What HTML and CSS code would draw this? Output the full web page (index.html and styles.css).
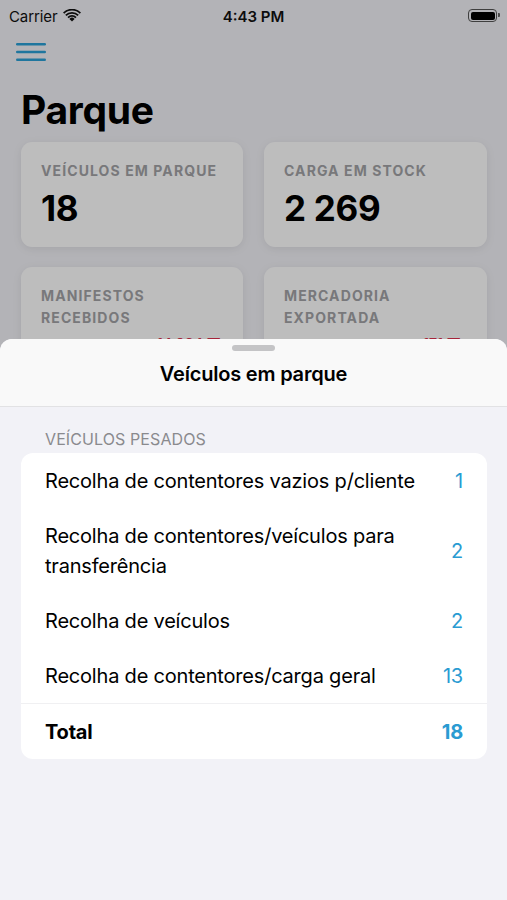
FILE: index.html
```html
<!DOCTYPE html>
<html lang="pt">
<head>
<meta charset="utf-8">
<title>Parque</title>
<link rel="stylesheet" href="styles.css">
</head>
<body>
<div class="screen">
  <div class="statusbar">
    <div class="sb-left">
      <span class="carrier">Carrier</span>
      <svg class="wifi" width="18" height="13" viewBox="0 0 18 13">
        <path d="M9 12.6 L6.4 9.9 A3.7 3.7 0 0 1 11.6 9.9 Z" fill="#111"/>
        <path d="M4.4 7.9 A6.5 6.5 0 0 1 13.6 7.9 L12.3 9.2 A4.7 4.7 0 0 0 5.7 9.2 Z" fill="#111"/>
        <path d="M2.2 5.7 A9.6 9.6 0 0 1 15.8 5.7 L14.5 7 A7.8 7.8 0 0 0 3.5 7 Z" fill="#111"/>
        <path d="M0 3.5 A12.7 12.7 0 0 1 18 3.5 L16.7 4.8 A10.9 10.9 0 0 0 1.3 4.8 Z" fill="#111"/>
      </svg>
    </div>
    <span class="time">4:43 PM</span>
    <div class="battery"><span class="battery-fill"></span><span class="battery-tip"></span></div>
  </div>

  <div class="navbar">
    <svg class="menu" width="30" height="20" viewBox="0 0 30 20">
      <rect x="0" y="1" width="30" height="2.6" rx="1.3" fill="#2a9fd6"/>
      <rect x="0" y="8.7" width="30" height="2.6" rx="1.3" fill="#2a9fd6"/>
      <rect x="0" y="16.4" width="30" height="2.6" rx="1.3" fill="#2a9fd6"/>
    </svg>
  </div>

  <h1 class="large-title">Parque</h1>

  <div class="stats">
    <div class="stat">
      <div class="stat-label">Veículos em parque</div>
      <div class="stat-value">18</div>
    </div>
    <div class="stat">
      <div class="stat-label">Carga em stock</div>
      <div class="stat-value">2 269</div>
    </div>
    <div class="stat">
      <div class="stat-label">Manifestos<br>recebidos</div>
      <div class="stat-trend trend-a">14 034 ▼</div>
    </div>
    <div class="stat">
      <div class="stat-label">Mercadoria<br>exportada</div>
      <div class="stat-trend trend-b">171 ▼</div>
    </div>
  </div>
</div>

<div class="dim"></div>

<div class="sheet">
  <div class="sheet-header">
    <div class="grabber"></div>
    <div class="sheet-title">Veículos em parque</div>
  </div>
  <div class="sheet-body">
    <div class="section-title">Veículos pesados</div>
    <div class="list">
      <div class="row"><span class="row-label">Recolha de contentores vazios p/cliente</span><span class="row-value">1</span></div>
      <div class="row"><span class="row-label">Recolha de contentores/veículos para transferência</span><span class="row-value">2</span></div>
      <div class="row"><span class="row-label">Recolha de veículos</span><span class="row-value">2</span></div>
      <div class="row"><span class="row-label">Recolha de contentores/carga geral</span><span class="row-value">13</span></div>
      <div class="row row-total"><span class="row-label">Total</span><span class="row-value">18</span></div>
    </div>
  </div>
</div>
</body>
</html>
```

FILE: styles.css
```css
* { box-sizing: border-box; }

html, body {
  margin: 0;
  padding: 0;
}

body {
  width: 507px;
  height: 900px;
  overflow: hidden;
  position: relative;
  background: #f2f2f7;
  font-family: Inter, "Liberation Sans", sans-serif;
  color: #000;
}

.screen {
  height: 900px;
  background: #f2f2f7;
}

.statusbar {
  height: 28px;
  padding: 4px 7px 0 9px;
  display: flex;
  align-items: center;
  justify-content: space-between;
  position: relative;
}

.sb-left {
  display: flex;
  align-items: center;
  gap: 6px;
}

.carrier {
  font-size: 15px;
  color: #111;
  letter-spacing: -0.1px;
}

.wifi { margin-top: -2px; }

.time {
  position: absolute;
  left: 0;
  right: 0;
  text-align: center;
  font-size: 15px;
  font-weight: 600;
  color: #111;
  pointer-events: none;
}

.battery {
  width: 29px;
  height: 13px;
  border: 1.5px solid #555;
  border-radius: 4px;
  padding: 1.5px;
  position: relative;
  margin-right: 3px;
  margin-top: -1px;
}

.battery-fill {
  display: block;
  width: 100%;
  height: 100%;
  background: #000;
  border-radius: 2px;
}

.battery-tip {
  position: absolute;
  right: -4px;
  top: 3px;
  width: 2px;
  height: 4px;
  background: #666;
  border-radius: 0 1px 1px 0;
}

.navbar {
  height: 50px;
  padding: 14px 0 0 16px;
}

.menu { display: block; }

.large-title {
  margin: 0;
  padding: 8px 0 0 21px;
  height: 64px;
  font-size: 39px;
  font-weight: 700;
  letter-spacing: -0.3px;
  line-height: 48px;
}

.stats {
  display: grid;
  grid-template-columns: 222px 223px;
  column-gap: 21px;
  row-gap: 20px;
  padding: 0 20px 0 21px;
}

.stat {
  background: #fff;
  border-radius: 11px;
  padding: 18px 20px 19px 20px;
  height: 105px;
  box-shadow: 0 2px 10px rgba(0, 0, 0, 0.08);
  position: relative;
  overflow: hidden;
}

.stats .stat:nth-child(n+3) { height: 140px; }

.stat-label {
  font-size: 14px;
  font-weight: 700;
  line-height: 22px;
  letter-spacing: 1.1px;
  text-transform: uppercase;
  color: #a3a3a6;
}

.stat-value {
  margin-top: 6px;
  font-size: 35px;
  font-weight: 700;
  line-height: 40px;
  letter-spacing: -0.3px;
}

.stat-trend {
  margin-top: 6px;
  font-size: 14px;
  line-height: 17px;
  font-weight: 600;
  color: #e0314d;
  text-align: right;
}

.trend-a { padding-right: 2px; }
.trend-b { padding-right: 6px; }

.dim {
  position: absolute;
  inset: 0;
  background: rgba(0, 0, 0, 0.26);
}

.sheet {
  position: absolute;
  left: 0;
  right: 0;
  top: 339px;
  bottom: 0;
  background: #f2f2f7;
  border-radius: 12px 12px 0 0;
  overflow: hidden;
}

.sheet-header {
  background: #f9f9f9;
  border-bottom: 1px solid #e2e2e4;
  height: 68px;
  display: flex;
  flex-direction: column;
  align-items: center;
}

.grabber {
  margin-top: 6px;
  width: 43px;
  height: 6px;
  border-radius: 3px;
  background: #c4c4c6;
}

.sheet-title {
  margin-top: 10px;
  font-size: 20px;
  font-weight: 600;
  line-height: 26px;
  letter-spacing: -0.2px;
}

.sheet-body {
  padding: 22px 20px 0 21px;
}

.section-title {
  padding-left: 24px;
  font-size: 16px;
  line-height: 20px;
  text-transform: uppercase;
  color: #8a8a8e;
  letter-spacing: 0.1px;
  margin-bottom: 4px;
}

.list {
  background: #fff;
  border-radius: 12px;
  overflow: hidden;
}

.row {
  display: flex;
  align-items: center;
  justify-content: space-between;
  gap: 20px;
  padding: 12.5px 24px;
  font-size: 20px;
  line-height: 30px;
  letter-spacing: -0.2px;
}

.row-label { color: #000; }

.row-value {
  color: #2a9bd2;
  flex-shrink: 0;
}

.row-total {
  border-top: 1px solid #f0f0f2;
  font-weight: 700;
}
```
